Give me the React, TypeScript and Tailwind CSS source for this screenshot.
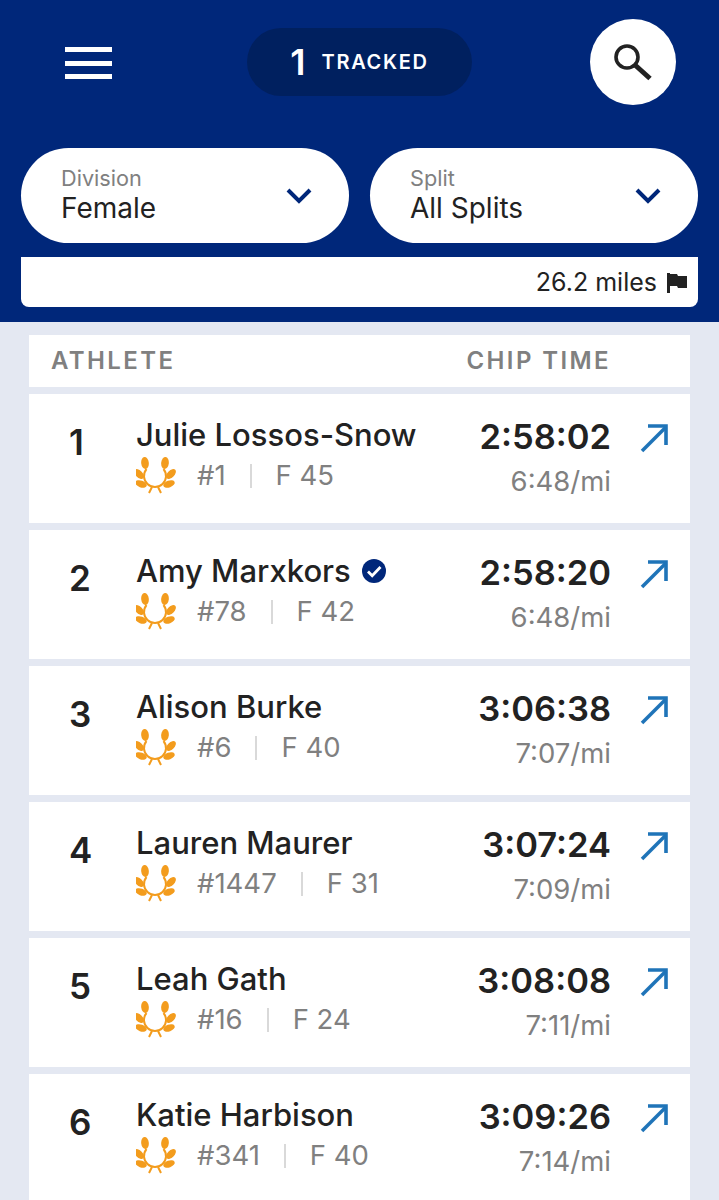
interface Athlete {
  rank: number;
  name: string;
  bib: string;
  group: string;
  time: string;
  pace: string;
  verified?: boolean;
}

const athletes: Athlete[] = [
  { rank: 1, name: "Julie Lossos-Snow", bib: "#1", group: "F 45", time: "2:58:02", pace: "6:48/mi" },
  { rank: 2, name: "Amy Marxkors", bib: "#78", group: "F 42", time: "2:58:20", pace: "6:48/mi", verified: true },
  { rank: 3, name: "Alison Burke", bib: "#6", group: "F 40", time: "3:06:38", pace: "7:07/mi" },
  { rank: 4, name: "Lauren Maurer", bib: "#1447", group: "F 31", time: "3:07:24", pace: "7:09/mi" },
  { rank: 5, name: "Leah Gath", bib: "#16", group: "F 24", time: "3:08:08", pace: "7:11/mi" },
  { rank: 6, name: "Katie Harbison", bib: "#341", group: "F 40", time: "3:09:26", pace: "7:14/mi" },
];

function Chevron() {
  return (
    <svg width="26" height="16" viewBox="0 0 26 16" fill="none" className="text-[#00277a]">
      <path d="M2 2l11 11L24 2" stroke="currentColor" strokeWidth="4" />
    </svg>
  );
}

function SearchGlyph() {
  return (
    <svg width="40" height="38" viewBox="0 0 40 38" fill="none" stroke="#222">
      <circle cx="14" cy="14" r="11" strokeWidth="3.6" />
      <path d="M22 22l15 13.500" strokeWidth="5" />
    </svg>
  );
}

// Age group laurel: three leaves per side around a thin ring
function Laurel() {
  return (
    <svg width="40" height="38" viewBox="0 0 40 38" fill="#f39c1d" className="shrink-0">
      <path d="M10.500 12A11 11 0 1 0 27.500 12" fill="none" stroke="#f39c1d" strokeWidth="2" />
      <path d="M16 30l-3 6M22 30l3 6" fill="none" stroke="#f39c1d" strokeWidth="2" />
      <ellipse cx="9" cy="6" rx="3.800" ry="6" transform="rotate(-6 9 6)" />
      <ellipse cx="29" cy="6" rx="3.800" ry="6" transform="rotate(6 29 6)" />
      <ellipse cx="3" cy="17" rx="3.400" ry="6" transform="rotate(-45 3 17)" />
      <ellipse cx="35" cy="17" rx="3.400" ry="6" transform="rotate(45 35 17)" />
      <ellipse cx="5" cy="27" rx="6" ry="3.400" transform="rotate(20 5 27)" />
      <ellipse cx="33" cy="27" rx="6" ry="3.400" transform="rotate(-20 33 27)" />
    </svg>
  );
}

function VerifiedBadge() {
  return (
    <svg width="26" height="26" viewBox="0 0 26 26" className="shrink-0">
      <circle cx="13" cy="13" r="12" fill="#00277a" />
      <path d="M7 13.500l4.200 4.200L19.500 9" fill="none" stroke="#fff" strokeWidth="2.800" />
    </svg>
  );
}

function TrendArrow() {
  return (
    <svg width="30" height="30" viewBox="0 0 30 30" fill="none" stroke="#1f74b8" strokeWidth="3.600">
      <path d="M2 28L26 4" />
      <path d="M8 3h18v19" />
    </svg>
  );
}

function Dropdown({ label, value }: { label: string; value: string }) {
  return (
    <button className="flex h-[95px] flex-1 items-center justify-between rounded-full bg-white pl-10 pr-[37px] text-left">
      <span className="-mt-[2px] flex flex-col">
        <span className="text-[21.700px] leading-[26px] text-[#808080]">{label}</span>
        <span className="text-[28px] leading-[34px] text-[#222]">{value}</span>
      </span>
      <Chevron />
    </button>
  );
}

function AthleteRow({ athlete }: { athlete: Athlete }) {
  return (
    <div className="flex h-[129px] shrink-0 bg-white">
      <div className="w-[107px] pl-10 pt-[27px] text-[35px] leading-[42px] font-semibold text-[#222]">{athlete.rank}</div>
      <div className="flex-1 pt-[21px]">
        <div className="flex items-center gap-[10px] text-[31px] leading-[40px] font-medium text-[#222]">
          {athlete.name}
          {athlete.verified && <VerifiedBadge />}
        </div>
        <div className="mt-[1px] flex h-[40px] items-center text-[27.500px] text-[#808080]">
          <Laurel />
          <span className="ml-[21px]">{athlete.bib}</span>
          <span className="mr-[24px] ml-[24px] h-[24px] w-[2px] bg-[#d9d9d9]" />
          <span>{athlete.group}</span>
        </div>
      </div>
      <div className="flex flex-col items-end pt-[20px]">
        <div className="text-[34.500px] leading-[46px] font-semibold text-[#222]">{athlete.time}</div>
        <div className="mt-[3px] text-[27.500px] leading-[36px] text-[#808080]">{athlete.pace}</div>
      </div>
      <div className="w-[79px] pt-[29px] pl-[29px]">
        <TrendArrow />
      </div>
    </div>
  );
}

export default function App() {
  return (
    <div className="h-[1200px] overflow-hidden bg-[#e4e8f2] font-['Inter',sans-serif]">
      <header className="h-[322px] bg-[#00277a] px-[21px]">
        <div className="flex h-[148px] items-start">
          {/* Menu */}
          <div className="mt-[47px] ml-[44px] flex h-[32px] w-[47px] flex-col justify-between">
            <span className="h-[5px] bg-white" />
            <span className="h-[5px] bg-white" />
            <span className="h-[5px] bg-white" />
          </div>
          <div className="mt-[28px] ml-[135px] flex h-[68px] w-[225px] items-center justify-center gap-[16px] rounded-full bg-[#00205f] text-white">
            <span className="text-[36px] font-semibold">1</span>
            <span className="text-[20px] font-semibold tracking-[1.700px]">TRACKED</span>
          </div>
          <div className="mt-[19px] ml-[118px] flex h-[86px] w-[86px] items-center justify-center rounded-full bg-white">
            <SearchGlyph />
          </div>
        </div>

        <div className="flex gap-[21px]">
          <Dropdown label="Division" value="Female" />
          <Dropdown label="Split" value="All Splits" />
        </div>

        <div className="mt-[14px] flex h-[50px] items-center justify-end gap-[9px] rounded-b-lg bg-white pt-[2px] pr-[10px] text-[25px] text-[#222]">
          26.2 miles
          <svg width="22" height="22" viewBox="0 0 22 22" fill="#222">
            <path d="M1 1h3v20H1zM4 2h7l1 2h9v12h-9l-1-2H4z" />
          </svg>
        </div>
      </header>

      <main className="flex flex-col gap-[7px] px-[29px] pt-[13px]">
        <div className="flex h-[52px] items-center justify-between bg-white pr-[79px] pl-[22px] text-[24px] font-semibold tracking-[2.400px] text-[#808080]">
          <span>ATHLETE</span>
          <span>CHIP TIME</span>
        </div>
        {athletes.map((athlete) => (
          <AthleteRow key={athlete.rank} athlete={athlete} />
        ))}
      </main>
    </div>
  );
}
